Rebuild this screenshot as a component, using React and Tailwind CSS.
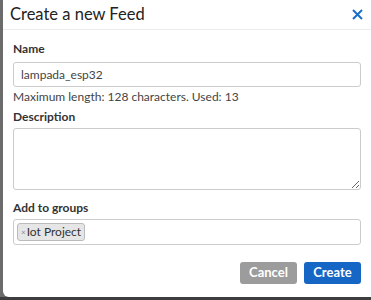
import React, { useState } from 'react';

const App = () => {
    const [name, setName] = useState('lampada_esp32');

    return (
        <div className="w-[371px] h-[300px] overflow-hidden bg-[#3d3d3d] flex flex-col" style={{ fontFamily: 'Lato, "Open Sans", sans-serif' }}>
            <div className="flex pl-[3px] bg-[#6b6b6b]">
                <div className="flex-1 h-[297px] bg-white rounded-bl-[6px] flex flex-col">
                    {/* header */}
                    <div className="h-[30px] flex items-center justify-between pl-[7px] pr-[6px] border-b border-[#ececec]">
                        <h2 className="text-[16.5px] text-[#222] leading-none">Create a new Feed</h2>
                        <button className="text-[#1a6fc9] w-[16px] h-[16px] flex items-center justify-center">
                            <svg width="11" height="11" viewBox="0 0 11 11">
                                <path d="M1 1 L10 10 M10 1 L1 10" stroke="currentColor" strokeWidth="2" />
                            </svg>
                        </button>
                    </div>

                    <form className="px-[10px] pt-[13px] flex flex-col">
                        <label className="text-[12px] font-bold text-[#333] leading-none">Name</label>
                        <input
                            type="text"
                            value={name}
                            onChange={(e) => setName(e.target.value)}
                            className="mt-[7px] h-[25px] w-full px-[7px] text-[12px] text-[#444] border border-[#ccc] rounded-[3px] outline-none"
                        />
                        <p className="mt-[3px] text-[12px] text-[#444] leading-[14px]">Maximum length: 128 characters. Used: 13</p>

                        <label className="mt-[7px] text-[12px] font-bold text-[#333] leading-none">Description</label>
                        <textarea className="mt-[5px] h-[62px] w-full border border-[#ccc] rounded-[3px] outline-none resize-y" />

                        <label className="mt-[12px] text-[12px] font-bold text-[#333] leading-none">Add to groups</label>
                        <div className="mt-[5px] h-[26px] w-full border border-[#ccc] rounded-[3px] flex items-center px-[3px]">
                            <span className="h-[18px] flex items-center pl-[3px] pr-[3px] bg-[#e6e6e6] border border-[#bbb] rounded-[3px] text-[12px] text-[#333]">
                                <span className="text-[8px] text-[#888] mr-[1px]">×</span>Iot Project
                            </span>
                        </div>

                        <div className="mt-[17px] flex justify-end gap-[7px]">
                            <button type="button" className="w-[57px] h-[22px] bg-[#9c9c9c] text-white text-[13px] font-bold rounded-[3px]">Cancel</button>
                            <button type="submit" className="w-[57px] h-[22px] bg-[#1666c5] text-white text-[13px] font-bold rounded-[3px]">Create</button>
                        </div>
                    </form>
                </div>
            </div>
            <div className="h-[3px]" />
        </div>
    );
};

export default App;
